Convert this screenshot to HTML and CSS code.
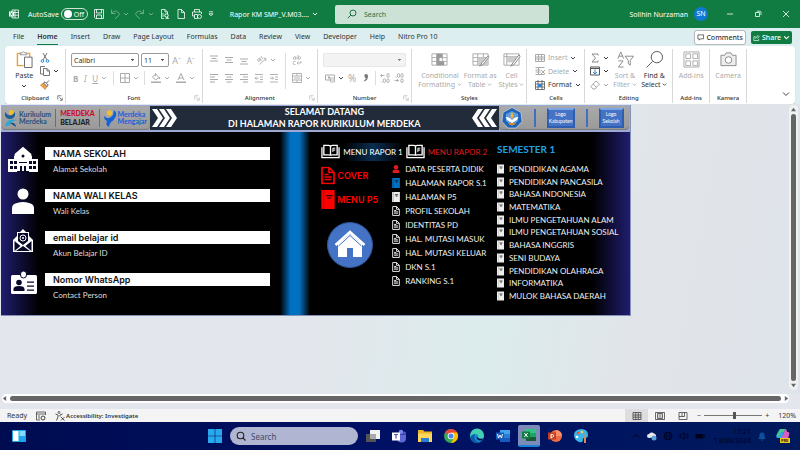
FILE: index.html
```
<!DOCTYPE html>
<html lang="id">
<head>
    <meta charset="UTF-8">
    <meta name="viewport" content="width=device-width, initial-scale=1.0">
    <title>Rapor KM SMP</title>
    <link rel="stylesheet" href="styles.css">
</head>
<body>
    <!-- shared icons -->
    <svg class="defs" aria-hidden="true">
        <symbol id="down" viewBox="0 0 6 6"><path d="M1 2l2 2 2-2" fill="none" stroke="currentColor"/></symbol>
        <symbol id="launch" viewBox="0 0 8 8"><path d="M1 6V1h5M3 3l3.500 3.500M7 3.500V7H3.500" fill="none" stroke="currentColor" stroke-width=".8"/></symbol>
        <symbol id="doc" viewBox="0 0 14 18"><path d="M1 1h7l5 5v11H1zM8 1v5h5M3.500 8h4M3.500 10.500h7M3.500 13h7" fill="none" stroke="currentColor" stroke-width="1.700"/></symbol>
        <symbol id="book" viewBox="0 0 14 18"><path d="M0 0h14v18H0z" fill="currentColor"/><path d="M2.500 0v18" stroke="#000" stroke-width=".6" opacity=".5"/><path d="M5 5h6M6.500 7.500h3" stroke="#000" stroke-width="1.400"/></symbol>
        <symbol id="open-book" viewBox="0 0 20 15"><path d="M1 3v11h18V3M3 1h5q2 0 2 1.500Q10 1 12 1h5v10h-5q-2 0-2 1-0-1-2-1H3zM10 2v10" fill="none" stroke="currentColor" stroke-width="1.400"/><path d="M12.500 8V4H15M12.500 6H15" fill="none" stroke="currentColor"/></symbol>
        <symbol id="chevrons" viewBox="0 0 25 18"><path d="M0 0h5l6 9-6 9H0l6-9zM7 0h5l6 9-6 9H7l6-9zM14 0h5l6 9-6 9h-5l6-9z" fill="#fff"/></symbol>
    </svg>

    <header class="titlebar">
        <svg class="ic" viewBox="0 0 10 10"><path d="M3 1h6.500v8H3zM6 1v8M3 3.500h6.500M3 6.200h6.500" fill="none" stroke="#fff" stroke-width=".8"/><path d="M0 2.500h5v5H0z" fill="#fff"/><path d="M1.500 3.500l2 3M3.500 3.500l-2 3" stroke="#107c41" stroke-width=".8"/></svg>
        <label class="autosave">AutoSave <span class="switch"><input type="checkbox" role="switch"><span>Off</span></span></label>
        <div class="quick">
            <button aria-label="Save"><svg class="ic" viewBox="0 0 10 10"><path d="M.5.5h9v9h-8l-1-1zM2.500.5v3.500h5V.5M2.500 9.500V6h5v3.500" fill="none" stroke="#fff" stroke-width=".8"/></svg></button>
            <button class="faded pair" aria-label="Undo"><svg class="ic" viewBox="0 0 10 10"><path d="M1.500.5v4h4M1.500 4.500Q5 .5 8 3t-1 5L5 9.800" fill="none" stroke="#fff" stroke-width=".9"/></svg><svg class="car"><use href="#down"/></svg></button>
            <button class="faded pair" aria-label="Redo"><svg class="ic" viewBox="0 0 10 10"><path d="M8.500.5v4h-4M8.500 4.500Q5 .5 2 3t1 5l2 1.800" fill="none" stroke="#fff" stroke-width=".9"/></svg><svg class="car"><use href="#down"/></svg></button>
            <button aria-label="Print preview"><svg class="ic" viewBox="0 0 10 10"><path d="M4 9.500H1.500v-9H5L7.500 3v2M5 .5V3h2.500M3 4v4" fill="none" stroke="#fff" stroke-width=".8"/><circle cx="6.500" cy="6.500" r="1.700" fill="none" stroke="#fff"/><path d="M7.500 8l2 1.800H5z" fill="#fff"/></svg></button>
            <button aria-label="New"><svg class="ic" viewBox="0 0 10 10"><path d="M2 .5h3.500L8.500 3.500v6H2zM5.500.5v3h3" fill="none" stroke="#fff" stroke-width=".8"/></svg></button>
            <button aria-label="Quick print"><svg class="ic" viewBox="0 0 10 10"><path d="M2.500 3V.5h5V3M2.500 7H.5V3h9v2M2.500 5.500h3v4h-3z" fill="none" stroke="#fff" stroke-width=".8"/><circle cx="7.500" cy="7.500" r="2" fill="none" stroke="#fff" stroke-width=".8"/></svg></button>
            <button aria-label="Customize"><svg class="car" viewBox="0 0 6 6"><path d="M1 .8h4M1 2.800l2 2 2-2z" fill="none" stroke="#fff" stroke-width=".8"/></svg></button>
        </div>
        <button class="filename">Rapor KM SMP_V.M03.... <svg class="car"><use href="#down"/></svg></button>
        <label class="search">
            <svg class="ic" viewBox="0 0 10 10"><circle cx="6" cy="4" r="3" fill="none" stroke="#217346"/><path d="M4 6L.8 9.200" stroke="#217346"/></svg>
            <input type="text" placeholder="Search" aria-label="Search">
        </label>
        <div class="account">
            <span>Solihin Nurzaman</span>
            <span class="avatar">SN</span>
        </div>
        <div class="window-buttons">
            <button aria-label="Minimize"><svg viewBox="0 0 8 8"><path d="M1 4h6" stroke="#fff" stroke-width=".8"/></svg></button>
            <button aria-label="Restore"><svg viewBox="0 0 8 8"><path d="M1.500 2.500h4v4h-4zM3 1.200h2.500q1.500 0 1.500 1.500V5" fill="none" stroke="#fff" stroke-width=".8"/></svg></button>
            <button aria-label="Close"><svg viewBox="0 0 8 8"><path d="M1 1l6 6M7 1L1 7" stroke="#fff" stroke-width=".8"/></svg></button>
        </div>
    </header>

    <nav class="tabs">
        <a href="#">File</a>
        <a href="#" class="active">Home</a>
        <a href="#">Insert</a>
        <a href="#">Draw</a>
        <a href="#">Page Layout</a>
        <a href="#">Formulas</a>
        <a href="#">Data</a>
        <a href="#">Review</a>
        <a href="#">View</a>
        <a href="#">Developer</a>
        <a href="#">Help</a>
        <a href="#">Nitro Pro 10</a>
        <div class="tab-buttons">
            <button class="comments"><svg viewBox="0 0 8 8"><path d="M1 1h6.500v4.500H4L2.500 7V5.500H1z" fill="none" stroke="currentColor" stroke-width=".8"/></svg>Comments</button>
            <button class="share"><svg viewBox="0 0 8 8"><path d="M3 3H1v4.500h5.500V5.500M3 5.500Q3 3 5.500 3M5 1l2 2-2 2" fill="none" stroke="currentColor" stroke-width=".8"/></svg>Share<svg class="car"><use href="#down"/></svg></button>
        </div>
    </nav>

    <section class="ribbon">
        <div class="group clipboard">
            <div class="tools">
                <button class="big"><svg viewBox="0 0 18 18"><path d="M12 2.500h2.500V6M5 2.500H1.500v13H8" fill="none" stroke="#e8a33d" stroke-width="1.500"/><path d="M4.500 4V2h2Q8-.5 9.500 2h2v2z" fill="#fff" stroke="#777" stroke-width=".8"/><path d="M9 6.500h8v11H9z" fill="#fff" stroke="#666"/></svg>Paste<svg class="car"><use href="#down"/></svg></button>
                <div class="stack">
                    <button aria-label="Cut"><svg class="ic" viewBox="0 0 10 10"><path d="M3 0l4 7M7 0L3 7" stroke="#555" stroke-width=".8"/><g fill="none" stroke="#2b88d8"><circle cx="2.500" cy="8" r="1.300"/><circle cx="7.500" cy="8" r="1.300"/></g></svg></button>
                    <button class="pair" aria-label="Copy"><svg class="ic" viewBox="0 0 10 10"><path d="M3.500 8H.5V.5H5M3.500 2.500h3.500L9.500 5v4.500h-6zM7 2.500V5h2.500" fill="none" stroke="#555" stroke-width=".8"/></svg><svg class="car"><use href="#down"/></svg></button>
                    <button aria-label="Format painter"><svg class="ic" viewBox="0 0 10 10"><path d="M.5 5l3-2 3.500 3.500-2 3z" fill="#f0a04b" stroke="#c87520" stroke-width=".6"/><path d="M3.500 3L5 1.800l3.200 3.200L7 6.500zM6.500 3L9 .5" fill="#fff" stroke="#555" stroke-width=".9"/></svg></button>
                </div>
            </div>
            <h2>Clipboard <svg><use href="#launch"/></svg></h2>
        </div>
        <div class="group font">
            <div class="tools rows">
                <div class="row">
                    <select class="wide" aria-label="Font"><option>Calibri</option></select>
                    <select class="narrow" aria-label="Font size"><option>11</option></select>
                    <button class="dim letter">A<sup>ˆ</sup></button>
                    <button class="dim letter small">A<sup>ˇ</sup></button>
                </div>
                <div class="row dim spread">
                    <button class="letter"><b>B</b></button>
                    <button class="letter"><i>I</i></button>
                    <button class="letter pair"><u>U</u><svg class="car"><use href="#down"/></svg></button>
                    <i class="rule"></i>
                    <button class="pair" aria-label="Borders"><svg class="ic" viewBox="0 0 10 10"><path d="M.5.5h9v9h-9zM5 .5v9M.5 5h9" fill="none" stroke="currentColor"/></svg><svg class="car"><use href="#down"/></svg></button>
                    <i class="rule"></i>
                    <button class="pair" aria-label="Fill color"><svg class="ic" viewBox="0 0 10 10"><path d="M4.500 1L8 4.500 4.500 7 1.500 4zM4.500 0v3M8.500 4v2" fill="none" stroke="currentColor"/><path d="M0 8.500h10V10H0z" fill="currentColor"/></svg><svg class="car"><use href="#down"/></svg></button>
                    <button class="pair" aria-label="Font color"><svg class="ic" viewBox="0 0 10 10"><path d="M2 7l3-6.500L8 7M3 5h4" fill="none" stroke="currentColor"/><path d="M0 8.500h10V10H0z" fill="currentColor"/></svg><svg class="car"><use href="#down"/></svg></button>
                </div>
            </div>
            <h2>Font <svg class="dim"><use href="#launch"/></svg></h2>
        </div>
        <div class="group align">
            <div class="tools dim">
                <div class="icon-grid">
                    <button aria-label="Top align"><svg class="ic" viewBox="0 0 10 10"><path d="M1 1h8M2.500 3.500h5M1 6h8" stroke="currentColor"/></svg></button>
                    <button aria-label="Middle align"><svg class="ic" viewBox="0 0 10 10"><path d="M1 2.500h8M2.500 5h5M1 7.500h8" stroke="currentColor"/></svg></button>
                    <button aria-label="Bottom align"><svg class="ic" viewBox="0 0 10 10"><path d="M1 4h8M2.500 6.500h5M1 9h8" stroke="currentColor"/></svg></button>
                    <button class="pair span" aria-label="Orientation"><svg class="ic" viewBox="0 0 10 10"><path d="M2.500 9.500l6.500-6M6.500 3L9 3.500 8.500 6" fill="none" stroke="currentColor" stroke-width=".9"/><circle cx="2" cy="5" r="1.300" fill="none" stroke="currentColor" stroke-width=".8"/><path d="M2.500 2.500l2 3.500M4 1l1.500 3" stroke="currentColor" stroke-width=".8"/></svg><svg class="car"><use href="#down"/></svg></button>
                    <button aria-label="Align left"><svg class="ic" viewBox="0 0 10 10"><path d="M1 1.500h8M1 4h5M1 6.500h8M1 9h5" stroke="currentColor"/></svg></button>
                    <button aria-label="Center"><svg class="ic" viewBox="0 0 10 10"><path d="M1 1.500h8M2.500 4h5M1 6.500h8M2.500 9h5" stroke="currentColor"/></svg></button>
                    <button aria-label="Align right"><svg class="ic" viewBox="0 0 10 10"><path d="M1 1.500h8M4 4h5M1 6.500h8M4 9h5" stroke="currentColor"/></svg></button>
                    <button aria-label="Decrease indent"><svg class="ic" viewBox="0 0 10 10"><path d="M1 1.500h8M6 4h3M6 6.500h3M1 9h8M4.500 5.200H1M2.500 3.700L1 5.200l1.500 1.500" fill="none" stroke="currentColor" stroke-width=".9"/></svg></button>
                    <button aria-label="Increase indent"><svg class="ic" viewBox="0 0 10 10"><path d="M1 1.500h8M6 4h3M6 6.500h3M1 9h8M1 5.200h3.500M3 3.700l1.500 1.500L3 6.700" fill="none" stroke="currentColor" stroke-width=".9"/></svg></button>
                </div>
                <i class="rule tall"></i>
                <div class="stack two">
                    <button aria-label="Wrap text"><svg class="ic" viewBox="0 0 10 10"><g fill="none" stroke="currentColor" stroke-width=".8"><circle cx="2.500" cy="3" r="1.300"/><path d="M3.900 1.500v3M6 0v4.500"/><circle cx="7.300" cy="3" r="1.300"/><path d="M3.500 6.500Q1 6 1 8t2.500 1.500M9 6v2H5M6.500 6.500L5 8l1.500 1.500"/></g></svg></button>
                    <button class="pair" aria-label="Merge"><svg class="ic" viewBox="0 0 10 10"><path d="M.5.5h9v9h-9zM.5 3h9M.5 7h9M5 .5V3M5 7v2.500M2 5h6" fill="none" stroke="currentColor" stroke-width=".9"/></svg><svg class="car"><use href="#down"/></svg></button>
                </div>
            </div>
            <h2>Alignment <svg class="dim"><use href="#launch"/></svg></h2>
        </div>
        <div class="group number">
            <div class="tools rows">
                <div class="row"><select class="fill" aria-label="Number format" disabled><option></option></select></div>
                <div class="row dim spread">
                    <button class="pair" aria-label="Accounting"><svg class="ic" viewBox="0 0 10 10"><path d="M.5 2h9v5h-9z" fill="none" stroke="currentColor"/><circle cx="4" cy="4.500" r="1.200" fill="currentColor"/><path d="M5.500 5h4v4h-4zM5.500 7h4" fill="#fff" stroke="currentColor" stroke-width=".8"/></svg><svg class="car dark"><use href="#down"/></svg></button>
                    <button class="letter percent">%</button>
                    <button aria-label="Comma style"><svg class="ic" viewBox="0 0 10 10"><path d="M5 1a2 2 0 0 1 2 2q0 4-3.500 5.500L3 7.500q1.700-1 1.800-2.600A2 2 0 0 1 5 1z" fill="#777"/></svg></button>
                    <i class="rule"></i>
                    <button aria-label="Increase decimal"><svg class="ic" viewBox="0 0 10 10"><g fill="none" stroke="currentColor" stroke-width=".9"><path d="M4.500 2.500H.5M2 1L.5 2.500 2 4"/><ellipse cx="8" cy="2.500" rx="1.200" ry="1.900"/><ellipse cx="4.500" cy="7.700" rx="1.200" ry="1.900"/><ellipse cx="8" cy="7.700" rx="1.200" ry="1.900"/><path d="M1.500 9h1"/></g></svg></button>
                    <button aria-label="Decrease decimal"><svg class="ic" viewBox="0 0 10 10"><g fill="none" stroke="currentColor" stroke-width=".9"><path d="M.5 7.500h4M3 6l1.500 1.500L3 9"/><ellipse cx="4.500" cy="2.500" rx="1.200" ry="1.900"/><ellipse cx="8" cy="2.500" rx="1.200" ry="1.900"/><ellipse cx="8" cy="7.700" rx="1.200" ry="1.900"/><path d="M1.500 4h1"/></g></svg></button>
                </div>
            </div>
            <h2>Number <svg class="dim"><use href="#launch"/></svg></h2>
        </div>
        <div class="group styles">
            <div class="tools dim">
                <button class="big"><svg viewBox="0 0 18 16"><path d="M1 2h16v12H1zM1 6h16M1 10h16M6 2v12M12 2v12" fill="none" stroke="currentColor"/><path d="M6 2h6v4H6zM6 6h3v4H6zM6 10h8v4H6z" fill="#999"/></svg><span>Conditional<br>Formatting <svg class="car"><use href="#down"/></svg></span></button>
                <button class="big"><svg viewBox="0 0 18 16"><path d="M1 2h16v12H1zM1 6h16M1 10h16M6 2v12M12 2v12" fill="none" stroke="currentColor"/><path d="M6 6h11v8H6z" fill="#ccc"/><path d="M17 4l-6 7-3 4 4-2 6-8z" fill="#fff" stroke="#888"/></svg><span>Format as<br>Table <svg class="car"><use href="#down"/></svg></span></button>
                <button class="big"><svg viewBox="0 0 18 16"><path d="M1 2h16v12H1zM1 5h16M4 2v12" fill="none" stroke="currentColor"/><path d="M4 5h10v6H4z" fill="#ccc"/><path d="M17 3l-6 8-3 4 4-2 6-8z" fill="#fff" stroke="#888"/></svg><span>Cell<br>Styles <svg class="car"><use href="#down"/></svg></span></button>
            </div>
            <h2>Styles</h2>
        </div>
        <div class="group cells">
            <div class="tools">
                <div class="stack lines">
                    <button class="dim"><svg class="ic" viewBox="0 0 10 10"><path d="M.5 1.500h9v7h-9zM.5 4h9M.5 6h9M3.500 1.500v7M6.500 1.500v7" fill="none" stroke="currentColor"/></svg>Insert <svg class="car dark"><use href="#down"/></svg></button>
                    <button class="dim"><svg class="ic" viewBox="0 0 10 10"><path d="M.5 1.500h9M.5 4h5M.5 6h5M.5 8.500h9M3.500 1.500v7M6 4l4 4M10 4L6 8" fill="none" stroke="currentColor"/></svg>Delete <svg class="car dark"><use href="#down"/></svg></button>
                    <button><svg class="ic" viewBox="0 0 10 10"><path d="M.5 1.500h9v8h-9zM.5 4h9M.5 7h9M3 0v10M7 0v10" fill="none" stroke="#555" stroke-width=".8"/><path d="M3 4h4v3H3z" fill="#2b88d8"/></svg>Format <svg class="car"><use href="#down"/></svg></button>
                </div>
            </div>
            <h2>Cells</h2>
        </div>
        <div class="group editing">
            <div class="tools">
                <div class="stack">
                    <button class="pair dim" aria-label="AutoSum"><svg class="ic" viewBox="0 0 10 10"><path d="M8 2.500V1H2l3.500 4L2 9h6V7.500" fill="none" stroke="#888"/></svg><svg class="car dark"><use href="#down"/></svg></button>
                    <button class="pair" aria-label="Fill"><svg class="ic" viewBox="0 0 10 10"><path d="M.5 1h9v8h-9zM.5 2.500h9" fill="none" stroke="#555"/><path d="M5 3.500V8M3 6l2 2 2-2" fill="none" stroke="#2b88d8"/></svg><svg class="car"><use href="#down"/></svg></button>
                    <button class="pair dim" aria-label="Clear"><svg class="ic" viewBox="0 0 10 10"><path d="M6 1l3.500 3L5 9H3L.8 6.500zM3 4l3.500 3.500" fill="none" stroke="currentColor"/></svg><svg class="car"><use href="#down"/></svg></button>
                </div>
                <button class="big dim"><svg viewBox="0 0 18 18"><path d="M1 8l3-7 3 7M2 5.500h4M1.500 10.500H6.500L1.500 17H7M8.500 5.500h9L14 10v5l-2-1.500V10z" fill="none" stroke="#888"/></svg><span>Sort &amp;<br>Filter <svg class="car"><use href="#down"/></svg></span></button>
                <button class="big"><svg viewBox="0 0 18 18"><circle cx="11.500" cy="6.500" r="6" fill="none" stroke="#555"/><path d="M7 11l-6.500 6.500" stroke="#555"/></svg><span>Find &amp;<br>Select <svg class="car"><use href="#down"/></svg></span></button>
            </div>
            <h2>Editing</h2>
        </div>
        <div class="group addins">
            <div class="tools dim"><button class="big"><svg viewBox="0 0 18 18"><path d="M1 1h16v16H1z" fill="none" stroke="currentColor"/><path d="M3 3h5v5H3zM10.500 3h5v5h-5zM3 10.500h5v5H3zM10.500 10.500h5v5h-5z" fill="none" stroke="currentColor"/></svg>Add-ins</button></div>
            <h2>Add-ins</h2>
        </div>
        <div class="group kamera">
            <div class="tools dim"><button class="big"><svg viewBox="0 0 18 18"><path d="M1 4.500h4L6.500 2h5L13 4.500h4v11H1z" fill="#eee" stroke="#888"/><circle cx="9" cy="9.500" r="3.500" fill="#fff" stroke="#888"/></svg>Camera</button></div>
            <h2>Kamera</h2>
        </div>
        <div class="group last"><button aria-label="Collapse ribbon"><svg class="ic" viewBox="0 0 10 10"><path d="M2 3.500l3 3 3-3" fill="none" stroke="#444"/></svg></button></div>
    </section>

    <main class="workspace">
        <div class="sheet">
            <div class="banner">
                <div class="logos">
                    <div class="logo kurikulum"><svg viewBox="0 0 12 18"><circle cx="6.500" cy="3.500" r="2.500" fill="#f3bd2c"/><path d="M0 3q5 7 10 0 1 7-5 7T0 3z" fill="#1c5f94"/><path d="M0 17q2-8 12-6-6 1-8 6z" fill="#2ba8d8"/><path d="M5 14q5-1 6 4-3-2-6-4z" fill="#174c83"/></svg><span>Kurikulum<br>Merdeka</span></div>
                    <i></i>
                    <div class="logo belajar"><span><em>MERDEKA</em><br>BELAJAR</span></div>
                    <i></i>
                    <div class="logo mengajar"><svg viewBox="0 0 12 18"><circle cx="5.500" cy="4" r="2.700" fill="#f3bd2c"/><path d="M0 7q5 5 9-1l1-5q4 3 1 8-2 3-4 4-2 3-2 5-4-2-2-6Q0 11 0 7z" fill="#1463d6"/></svg><span>Merdeka<br>Mengajar</span></div>
                </div>
                <svg class="chev"><use href="#chevrons"/></svg>
                <h1>SELAMAT DATANG<br>DI HALAMAN RAPOR KURIKULUM MERDEKA</h1>
                <svg class="chev flip"><use href="#chevrons"/></svg>
                <div class="logos badges">
                    <svg class="tutwuri" viewBox="0 0 22 22"><path d="M11 .5l9 5 1 9-6 6.500H7L1 14.500l1-9z" fill="#1e63b8" stroke="#dbe6f5" stroke-width=".6"/><path d="M11 4l6 3v7l-6 5-6-5V7z" fill="#5b9be0"/><path d="M4.500 10q3.500-.5 6.500 3 3-3.500 6.500-3-1 3.500-4 4.500L11 16l-2.500-1.500q-3-1-4-4.500z" fill="#fff"/><path d="M11 5q3 4 0 7-3-3 0-7z" fill="#f2b632"/><path d="M7 16h8l-2 2H9z" fill="#d98b2b"/></svg>
                    <i></i>
                    <button>Logo<br>Kabupaten</button>
                    <i></i>
                    <button>Logo<br>Sekolah</button>
                </div>
            </div>

            <div class="board">
                <div class="profile">
                    <div class="entry">
                        <svg viewBox="0 0 30 27"><path d="M15 2l9 8v15H6V10z" fill="#fff"/><path d="M7 9l8-7 8 7" fill="none" stroke="#fff" stroke-width="2"/><path d="M0 13h9v13H0zM21 13h9v13h-9z" fill="#fff"/><path d="M2 15h3v3H2zM6 15h3v3H6zM2 20h3v3H2zM6 20h3v3H6zM21 15h3v3h-3zM25 15h3v3h-3zM21 20h3v3h-3zM25 20h3v3h-3zM11 16h8v1h-8zM12 20h2v6h-2zM16 20h2v6h-2z" fill="#08082a"/><circle cx="15" cy="10" r="1.500" fill="#08082a"/></svg>
                        <div><strong>NAMA SEKOLAH</strong><span>Alamat Sekolah</span></div>
                    </div>
                    <div class="entry">
                        <svg viewBox="0 0 30 27"><circle cx="15" cy="6" r="5.500" fill="#fff"/><path d="M4 26v-6q0-4 5-5 6-2 12 0 5 1 5 5v6z" fill="#fff"/></svg>
                        <div><strong>NAMA WALI KELAS</strong><span>Wali Kelas</span></div>
                    </div>
                    <div class="entry">
                        <svg viewBox="0 0 30 27"><path d="M5 10l4-4V2h3l3-3 3 3h3v4l4 4v12H5z" fill="#fff"/><path d="M10 3h10v8l-5 4-5-4zM6.500 11l6 5-6 5zM23.500 11l-6 5 6 5zM8 21l7-5 7 5z" fill="#08082a"/><circle cx="15" cy="8" r="3" fill="none" stroke="#fff"/><circle cx="15" cy="8" r="1" fill="#fff"/></svg>
                        <div><strong>email belajar id</strong><span>Akun Belajar ID</span></div>
                    </div>
                    <div class="entry">
                        <svg viewBox="0 0 30 27"><rect x="3" y="3" width="26" height="19" rx="1.500" fill="#fff"/><rect x="12.500" y="-1" width="6" height="7" rx="3" fill="#fff" stroke="#08082a"/><circle cx="11" cy="10.500" r="2.800" fill="#08082a"/><path d="M5.500 19v-2q0-3 5.500-3t5.500 3v2zM19 9.500h7v1.300h-7zM19 13.500h7v1.300h-7zM19 17.500h7v1.300h-7z" fill="#08082a"/></svg>
                        <div><strong>Nomor WhatsApp</strong><span>Contact Person</span></div>
                    </div>
                </div>

                <div class="band"></div>

                <div class="menus">
                    <div class="heads">
                        <a href="#"><svg><use href="#open-book"/></svg><span class="glow">MENU RAPOR 1</span></a>
                        <a href="#"><svg><use href="#open-book"/></svg><span class="red">MENU RAPOR 2</span></a>
                    </div>
                    <div class="main-links">
                        <a href="#"><svg viewBox="0 0 14 18"><use href="#doc"/></svg>COVER</a>
                        <a href="#"><svg viewBox="0 0 14 20"><path d="M0 0h14v20H0z" fill="red"/><path d="M2.500 0v20" stroke="#700" stroke-width=".6"/><path d="M5 6h7M6 8.500h4" stroke="#000"/></svg>MENU P5</a>
                        <a href="#" class="home" aria-label="Home"><svg viewBox="0 0 46 46"><circle cx="23" cy="23" r="22.500" fill="#4472c4" stroke="#2f5597"/><path d="M23 12l12 10v13h-9v-9h-6v9h-9V22z" fill="#fff"/><path d="M8.500 23L23 10l14.500 13" fill="none" stroke="#fff" stroke-width="2.500"/><path d="M11.500 24L23 13.500 34.500 24" fill="none" stroke="#4472c4"/></svg></a>
                    </div>
                    <ul class="pages">
                        <li><a href="#"><svg class="red" viewBox="0 0 14 18"><circle cx="7" cy="6" r="4" fill="currentColor"/><path d="M1 16v-3q0-3 6-3t6 3v3z" fill="currentColor"/></svg>DATA PESERTA DIDIK</a></li>
                        <li><a href="#"><svg class="blue"><use href="#book"/></svg>HALAMAN RAPOR S.1</a></li>
                        <li><a href="#"><svg><use href="#book"/></svg>HALAMAN P5</a></li>
                        <li><a href="#"><svg><use href="#doc"/></svg>PROFIL SEKOLAH</a></li>
                        <li><a href="#"><svg><use href="#doc"/></svg>IDENTITAS PD</a></li>
                        <li><a href="#"><svg><use href="#doc"/></svg>HAL. MUTASI MASUK</a></li>
                        <li><a href="#"><svg><use href="#doc"/></svg>HAL. MUTASI KELUAR</a></li>
                        <li><a href="#"><svg><use href="#doc"/></svg>DKN S.1</a></li>
                        <li><a href="#"><svg><use href="#doc"/></svg>RANKING S.1</a></li>
                    </ul>
                </div>

                <div class="semester">
                    <h2>SEMESTER 1</h2>
                    <ul class="pages">
                        <li><a href="#"><svg><use href="#book"/></svg>PENDIDIKAN AGAMA</a></li>
                        <li><a href="#"><svg><use href="#book"/></svg>PENDIDIKAN PANCASILA</a></li>
                        <li><a href="#"><svg><use href="#book"/></svg>BAHASA INDONESIA</a></li>
                        <li><a href="#"><svg><use href="#book"/></svg>MATEMATIKA</a></li>
                        <li><a href="#"><svg><use href="#book"/></svg>ILMU PENGETAHUAN ALAM</a></li>
                        <li><a href="#"><svg><use href="#book"/></svg>ILMU PENGETAHUAN SOSIAL</a></li>
                        <li><a href="#"><svg><use href="#book"/></svg>BAHASA INGGRIS</a></li>
                        <li><a href="#"><svg><use href="#book"/></svg>SENI BUDAYA</a></li>
                        <li><a href="#"><svg><use href="#book"/></svg>PENDIDIKAN OLAHRAGA</a></li>
                        <li><a href="#"><svg><use href="#book"/></svg>INFORMATIKA</a></li>
                        <li><a href="#"><svg><use href="#book"/></svg>MULOK BAHASA DAERAH</a></li>
                    </ul>
                </div>
            </div>
        </div>
        <div class="vscroll">
            <svg viewBox="0 0 6 6"><path d="M3 1l3 4H0z" fill="#666"/></svg>
            <span></span>
            <svg viewBox="0 0 6 6"><path d="M3 5l3-4H0z" fill="#666"/></svg>
        </div>
    </main>
    <div class="hscroll">
        <svg viewBox="0 0 6 6"><path d="M1 3l4-3v6z" fill="#666"/></svg>
        <span></span>
        <svg viewBox="0 0 6 6"><path d="M5 3L1 0v6z" fill="#666"/></svg>
    </div>

    <footer class="statusbar">
        <span>Ready</span>
        <svg class="ic macro" viewBox="0 0 10 10"><path d="M9.500 4V1h-9v8H4M.5 3h9M2 5h2M2 7h2" fill="none" stroke="#444" stroke-width=".8"/><circle cx="7" cy="7" r="2" fill="none" stroke="#444"/></svg>
        <button class="access"><svg class="ic" viewBox="0 0 10 10"><circle cx="4" cy="1.500" r="1" fill="none" stroke="#444" stroke-width=".8"/><path d="M.5 3L3 4v2L1.500 9.500M7.500 3L5 4v1.500M6 6l3.500 3.500M9.500 6L6 9.500" fill="none" stroke="#444" stroke-width=".9"/></svg>Accessibility: Investigate</button>
        <div class="views">
            <button class="on" aria-label="Normal"><svg class="ic" viewBox="0 0 10 10"><path d="M1 1.500h8v7H1zM1 4h8M1 6.200h8M3.700 1.500v7M6.300 1.500v7" fill="none" stroke="#444" stroke-width=".8"/></svg></button>
            <button aria-label="Page layout"><svg class="ic" viewBox="0 0 10 10"><path d="M.5 1.500h9v7h-9zM2.500 2.500h5v5h-5zM3.500 4h3M3.500 6h3" fill="none" stroke="#444" stroke-width=".8"/></svg></button>
            <button aria-label="Page break"><svg class="ic" viewBox="0 0 10 10"><path d="M1 1.500h8v7H1zM4 1.500v4M1 5.500h5.500v-4" fill="none" stroke="#444" stroke-width=".8"/></svg></button>
        </div>
        <div class="zoom">
            <button aria-label="Zoom out">−</button>
            <input type="range" min="0" max="100" value="53" aria-label="Zoom">
            <button aria-label="Zoom in">+</button>
            <span>120%</span>
        </div>
    </footer>

    <div class="taskbar">
        <button class="widgets" aria-label="Widgets"><svg viewBox="0 0 14 14"><rect y="1" width="14" height="12" rx="1" fill="#1fa4ee"/><path d="M1 2h5.500v10H1z" fill="#fff"/><path d="M7.500 2H13v5H7.500z" fill="#7fdcff"/></svg></button>
        <div class="apps">
            <button aria-label="Start"><svg viewBox="0 0 14 14"><path d="M0 0h6.700v6.700H0zM7.300 0H14v6.700H7.300zM0 7.300h6.700V14H0zM7.300 7.300H14V14H7.300z" fill="#27a9ee"/></svg></button>
            <label class="task-search"><svg class="ic" viewBox="0 0 10 10"><circle cx="4.500" cy="4.500" r="3.300" fill="none" stroke="#222" stroke-width="1.100"/><path d="M7 7l2.500 2.500" stroke="#222" stroke-width="1.100"/></svg><input type="text" placeholder="Search" aria-label="Search Windows"></label>
            <button aria-label="Task view"><svg viewBox="0 0 14 14"><path d="M0 5h10v8H0z" fill="#555"/><path d="M4 1h10v9H4z" fill="#f2f2f2"/><path d="M4 5h6v5H4z" fill="#aaa"/></svg></button>
            <button aria-label="Teams"><svg viewBox="0 0 14 14"><circle cx="9" cy="3" r="2.300" fill="#7b83eb"/><circle cx="12.500" cy="4" r="1.500" fill="#5059c9"/><path d="M5 5.500h9v4q0 4-4.500 4T5 9.500z" fill="#5f67d6"/><path d="M0 3.500h8v8H0z" fill="#fff"/><path d="M2 5.500h4M4 5.500v4" stroke="#4b53bc" stroke-width="1.200"/></svg></button>
            <button aria-label="Explorer"><svg viewBox="0 0 14 14"><path d="M0 1h5l1.500 1.500H14V13H0z" fill="#f0b429"/><path d="M0 4.500h14V13H0z" fill="#ffd75e"/><path d="M3 9h8v4H3z" fill="#2b7cd3"/></svg></button>
            <button aria-label="Chrome"><svg viewBox="0 0 14 14"><circle cx="7" cy="7" r="7" fill="#34a853"/><path d="M7 7L.9 3.500A7 7 0 0 1 13.100 3.500z" fill="#ea4335"/><path d="M7 3.500h6.100A7 7 0 0 1 7 14l3-5.300z" fill="#fbbc04"/><circle cx="7" cy="7" r="3.300" fill="#fff"/><circle cx="7" cy="7" r="2.500" fill="#4285f4"/></svg></button>
            <button aria-label="Edge"><svg viewBox="0 0 14 14"><circle cx="7" cy="7" r="7" fill="#1686d0"/><path d="M0 6a7 7 0 0 1 14 1q0 3-4 3-2 0-2-1 1-4-3-4Q1 5 0 8z" fill="#45cfb0"/><path d="M5 5q-2 4 1 7 3 2 6 0-5 4-10 0-3-5 3-7z" fill="#0c59a4"/><path d="M8 8.500q1 2 5 1l-1 2Q7 12 6.500 8z" fill="#001058"/></svg></button>
            <button aria-label="Word"><svg viewBox="0 0 14 14"><path d="M4 1h10v12H4z" fill="#41a5ee"/><path d="M4 5h10v8H4z" fill="#2b7cd3"/><path d="M4 9h10v4H4z" fill="#185abd"/><path d="M0 3.500h8v7H0z" fill="#185abd"/><path d="M1.500 5l1 4L4 6l1.500 3 1-4" fill="none" stroke="#fff" stroke-width=".9"/></svg></button>
            <button class="current" aria-label="Excel"><svg viewBox="0 0 14 14"><path d="M4 1h10v12H4z" fill="#33c481"/><path d="M4 5h10v8H4z" fill="#21a366"/><path d="M4 9h10v4H4z" fill="#185c37"/><path d="M0 3.500h8v7H0z" fill="#107c41"/><path d="M2.300 5l3.400 4M5.700 5L2.300 9" stroke="#fff"/></svg></button>
            <button aria-label="PowerPoint"><svg viewBox="0 0 14 14"><circle cx="8" cy="7" r="6" fill="#ed6c47"/><path d="M8 7V1a6 6 0 0 1 6 6z" fill="#ff8f6b"/><path d="M0 3.500h8v7H0z" fill="#c43e1c"/><path d="M3 9.500v-4h1.500q1.200 0 1.200 1.200T4.500 8H3" fill="none" stroke="#fff"/></svg></button>
            <button aria-label="Paint"><svg viewBox="0 0 14 14"><path d="M7 0q7 0 7 6 0 3-3 3t-2 2q0 3-4 2Q0 11 0 6t7-6z" fill="#39b5ea"/><circle cx="4" cy="4" r="1.300" fill="#f25022"/><circle cx="8" cy="3" r="1.300" fill="#ffd23f"/><circle cx="3" cy="8" r="1.300" fill="#fff"/><path d="M11 3l1 6v5h-2V9z" fill="#d98b4a"/></svg></button>
        </div>
        <div class="tray">
            <svg viewBox="0 0 10 10"><path d="M2 6.500l3-3 3 3" fill="none" stroke="#02021c"/></svg>
            <svg viewBox="0 0 10 10"><path d="M2 7a2 2 0 0 1 0-4 3 3 0 0 1 5-.5Q9.500 3 9 6z" fill="#e8e8e8"/><circle cx="7" cy="7" r="2.500" fill="#5aa2d8"/></svg>
            <svg viewBox="0 0 10 10"><circle cx="5" cy="5" r="4" fill="none" stroke="#02021c"/><path d="M1 5h8M5 1q-4 4 0 8M5 1q4 4 0 8" fill="none" stroke="#02021c" stroke-width=".7"/></svg>
            <svg viewBox="0 0 10 10"><path d="M1 3.500h2L5 1.500v7L3 6.500H1zM6.500 3.500q1.500 1.500 0 3M8 2q2.500 3 0 6" fill="none" stroke="#02021c" stroke-width=".9"/></svg>
            <svg viewBox="0 0 10 10"><path d="M.5 3h8v4.500h-8z" fill="#02021c"/><path d="M9 4.200h1v2H9z" fill="#02021c"/></svg>
            <div class="clock">17:21<br>13/08/2024</div>
            <svg viewBox="0 0 10 10"><path d="M1 8q1.500-1 1.500-4a2.500 2.500 0 0 1 5 0Q7.500 7 9 8zM4 8.500h2v1H4z" fill="#0c4f9c"/></svg>
            <svg class="copilot" viewBox="0 0 14 14"><path d="M4 0h5L6 9H2Q-1 9 1 5z" fill="#2aa7e8"/><path d="M9 0q2 0 2 3h1q2 0 1 3l-1 4H5l3-7z" fill="#d75fc0"/><path d="M4 0h5L8 3H5L3 8q-3 0-2-3z" fill="#45c48c"/><path d="M4 9h10v5H4z" fill="#f5c518"/><text x="5" y="13" font-size="4" font-weight="bold" fill="#222">PRE</text></svg>
        </div>
    </div>
</body>
</html>
```

FILE: styles.css
```
* {
    box-sizing: border-box;
}
body {
    margin: 0;
    height: 100vh;
    display: flex;
    flex-direction: column;
    overflow: hidden;
    font-family: "Noto Sans", "Open Sans", sans-serif;
    font-size: 7px;
    color: #333;
    background: linear-gradient(#dceeef 110px, #e3e6ec 110px);
}
button, input, select {
    font: inherit;
    color: inherit;
    background: none;
    border: 0;
    padding: 0;
    margin: 0;
}
button {
    display: flex;
    align-items: center;
    justify-content: center;
}
a {
    color: inherit;
    text-decoration: none;
}
svg {
    display: block;
    flex: none;
    overflow: visible;
}
.defs {
    position: absolute;
    width: 0;
    height: 0;
}
.ic {
    width: 10px;
    height: 10px;
}
.car {
    width: 6px;
    height: 6px;
}
.pair {
    gap: 3px;
}
.dim {
    color: #aaa;
}
.dark {
    color: #444;
}

/* title bar */
.titlebar {
    flex: none;
    display: flex;
    align-items: center;
    height: 28px;
    padding-left: 9px;
    color: #fff;
    background: #107c41;
    white-space: nowrap;
}
.autosave {
    display: flex;
    align-items: center;
    gap: 2px;
    margin-left: 9px;
}
.switch {
    display: flex;
    align-items: center;
    gap: 2px;
    width: 27px;
    height: 12px;
    padding-left: 2px;
    border: 1px solid #cfe5d8;
    border-radius: 6px;
}
.switch input {
    flex: none;
    appearance: none;
    width: 8px;
    height: 8px;
    border-radius: 50%;
    background: #fff;
}
.quick {
    display: flex;
    align-items: center;
    gap: 6px;
    margin-left: 6px;
}
.faded {
    opacity: .4;
}
.filename {
    gap: 3px;
    margin-left: 16px;
}
.search {
    flex: 0 1 27%;
    display: flex;
    align-items: center;
    gap: 7px;
    height: 19px;
    margin-left: 17px;
    padding-left: 12px;
    border-radius: 2px;
    background: #cde2d6;
}
.search input {
    flex: 1;
    min-width: 0;
    color: #217346;
}
.search input::placeholder {
    color: #217346;
}
.account {
    display: flex;
    align-items: center;
    gap: 6px;
    margin-left: auto;
}
.avatar {
    width: 14px;
    height: 14px;
    border-radius: 50%;
    line-height: 14px;
    text-align: center;
    background: #0f78d4;
}
.window-buttons {
    display: flex;
    gap: 20px;
    margin: 0 10px 0 18px;
}
.window-buttons svg {
    width: 8px;
    height: 8px;
}

/* ribbon tabs */
.tabs {
    flex: none;
    display: flex;
    align-items: center;
    gap: 13px;
    height: 18px;
    padding: 0 8px 0 13px;
}
.tabs a {
    line-height: 14px;
    border-bottom: 1px solid transparent;
    white-space: nowrap;
}
.tabs .active {
    font-weight: 600;
    border-color: #107c41;
}
.tab-buttons {
    display: flex;
    gap: 6px;
    margin-left: auto;
}
.tab-buttons button {
    gap: 2px;
    height: 13px;
    padding: 0 2px;
    border-radius: 2px;
    font-weight: 500;
}
.tab-buttons svg {
    width: 7px;
    height: 7px;
}
.comments {
    background: #fff;
    outline: 1px solid #b8b8b8;
}
.share {
    color: #fff;
    background: #107c41;
}

/* ribbon */
.ribbon {
    flex: none;
    display: flex;
    height: 58px;
    margin: 0 5px;
    border-radius: 4px;
    background: #fff;
    box-shadow: 0 1px 1px #c4c8d6;
}
.group {
    display: flex;
    flex-direction: column;
    min-width: 0;
    margin: 3px 0 1px;
    border-right: 1px solid #d8d8d8;
}
.clipboard { flex: 61 1 0; }
.font { flex: 138 1 0; }
.align { flex: 116 1 0; }
.number { flex: 95 1 0; }
.styles { flex: 116 1 0; }
.cells { flex: 58 1 0; }
.editing { flex: 88 1 0; }
.addins { flex: 37 1 0; }
.kamera { flex: 36 1 0; }
.last {
    flex: 45 1 0;
    border: 0;
    align-items: flex-end;
    justify-content: flex-end;
    padding: 0 4px 4px 0;
}
.tools {
    flex: 1;
    display: flex;
    justify-content: space-evenly;
}
.clipboard .tools,
.styles .tools,
.cells .tools {
    padding-left: 4px;
}
.group h2 {
    display: flex;
    align-items: center;
    margin: 0;
    height: 10px;
    font-size: 6px;
    line-height: 10px;
    font-weight: 500;
}
.group h2::before {
    content: "";
    flex: 1;
}
.group h2::after {
    content: "";
    flex: 1;
}
.group h2 svg {
    order: 3;
    width: 6px;
    height: 6px;
    margin-right: 2px;
    margin-left: -8px;
}
.big {
    flex-direction: column;
    justify-content: flex-start;
    gap: 3px;
    padding-top: 2px;
    line-height: 9px;
}
.big > svg:first-child {
    width: 17px;
    height: 17px;
}
.big span .car {
    display: inline-block;
    width: 5px;
    height: 5px;
}
.stack {
    display: flex;
    flex-direction: column;
    align-items: flex-start;
    justify-content: space-evenly;
}
.two {
    justify-content: flex-start;
    gap: 4px;
    padding-top: 4px;
}
.two button {
    height: 14px;
}
.lines button {
    gap: 3px;
}
.rows {
    flex-direction: column;
    justify-content: flex-start;
    gap: 4px;
    padding: 4px 5px;
}
.row {
    display: flex;
    align-items: center;
    gap: 2px;
    height: 14px;
}
.spread {
    justify-content: space-between;
    padding: 0 2px;
}
.row select {
    height: 14px;
    padding: 0 2px;
    border: 1px solid #9a9a9a;
    border-radius: 2px;
    appearance: none;
    background: linear-gradient(45deg, transparent 50%, #555 50%) right 5px center / 2px 2px no-repeat, linear-gradient(-45deg, transparent 50%, #555 50%) right 3px center / 2px 2px no-repeat;
}
.wide {
    flex: 72;
}
.narrow {
    flex: 25;
}
.row .fill {
    flex: 1;
    border-color: #ddd;
    background-color: #eee;
}
.letter {
    font-size: 8px;
}
.row > .dim.letter {
    flex: 14;
    font-size: 9px;
}
.row > .dim.small {
    font-size: 8px;
}
.letter sup {
    font-size: 7px;
    line-height: 7px;
}
.row .percent {
    font-size: 10px;
}
.rule {
    width: 1px;
    height: 14px;
    background: #ddd;
}
.tall {
    height: 36px;
    margin-top: 4px;
}
.icon-grid {
    display: grid;
    grid-template-columns: repeat(5, 10px);
    grid-template-rows: 14px 14px;
    gap: 4px 5px;
    padding-top: 4px;
}
.span {
    grid-column: span 2;
}

/* workspace */
.workspace {
    flex: 1;
    display: flex;
    justify-content: space-between;
    align-items: flex-start;
    min-height: 0;
    padding: 1px 2px 4px 1px;
    background: linear-gradient(100deg, #e3e6ed, #e3e6ec 40%, #dceced 62%, #e1e4e9 80%, #dfe4ea);
}
.sheet {
    flex: 0 0 79%;
    font-family: Lato, "Open Sans", sans-serif;
    border: 1px solid #8791b8;
    border-width: 0 1px 1px 0;
}
.banner {
    display: flex;
    align-items: center;
    height: 27px;
    padding: 1px 1px 2px;
    background: #9da8d4;
}
.banner h1 {
    flex: 1;
    margin: 0;
    font-size: 9px;
    line-height: 12px;
    font-weight: 700;
    text-align: center;
    white-space: nowrap;
    color: #fff;
    align-self: stretch;
    background: #222b3a;
}
.chev {
    width: 27px;
    height: 24px;
    padding: 3px 0 3px 2px;
    background: #222b3a;
}
.flip {
    transform: scaleX(-1);
}
.logos {
    display: flex;
    align-items: center;
    justify-content: space-between;
    width: 148px;
    height: 24px;
    padding: 0 3px;
    border-radius: 4px;
    background: linear-gradient(#a9a9a9, #9a9a9a);
    box-shadow: inset 0 -1px 1px #777;
}
.logos i {
    width: 1px;
    height: 18px;
    background: #4472c4;
}
.logo {
    display: flex;
    align-items: center;
    gap: 2px;
    font-size: 7px;
    line-height: 7px;
    font-weight: 700;
    color: #2a4f7c;
}
.logo svg {
    width: 12px;
    height: 18px;
}
.belajar {
    line-height: 9px;
    font-weight: 900;
    color: #222;
}
.belajar em {
    font-style: normal;
    color: #c8102e;
}
.mengajar {
    color: #1463d6;
}
.badges {
    width: 130px;
    padding: 0 5px 0 2px;
}
.badges i {
    width: 2px;
    background: #3f6fc0;
}
.badges i + button {
    min-width: 25px;
}
.badges .tutwuri {
    width: 22px;
    height: 22px;
}
.badges button {
    height: 20px;
    border: 2px solid #2f5eb0;
    border-top-color: #7ba4e8;
    font-size: 5px;
    line-height: 7px;
    color: #fff;
    background: #4472c4;
}
.board {
    display: grid;
    grid-template-columns: 280fr 30fr 186fr 134fr;
    height: 183px;
    color: #fff;
    background: linear-gradient(90deg, #201c70, #000 6%, #000 94%, #201c70);
}
.profile {
    display: flex;
    flex-direction: column;
    padding: 14px 10px 0 7px;
}
.entry {
    display: flex;
    gap: 7px;
    height: 42px;
}
.entry > svg {
    width: 30px;
    height: 27px;
}
.entry > div {
    flex: 1;
}
.entry strong {
    display: block;
    margin-top: 1px;
    padding-left: 8px;
    font-family: Inter, "Open Sans", sans-serif;
    font-size: 9px;
    line-height: 13px;
    font-weight: 600;
    color: #111;
    background: #fff;
}
.entry span {
    display: block;
    padding-left: 8px;
    font-size: 8px;
    line-height: 18px;
    color: #ddd;
}
.band {
    background: linear-gradient(90deg, #000, #0070c0 35%, #0070c0 65%, #000);
}
.menus {
    display: grid;
    grid-template-columns: 71fr 104fr;
    grid-template-rows: 21px 1fr;
    padding: 9px 0 0 11px;
    white-space: nowrap;
}
.menus .pages {
    height: 122px;
    margin-top: 2px;
}
.heads {
    grid-column: span 2;
    display: flex;
    gap: 3px;
    font-size: 8px;
}
.heads a {
    display: flex;
    align-items: center;
    gap: 3px;
}
.heads svg {
    width: 19px;
    height: 15px;
}
.glow {
    line-height: 18px;
    background: linear-gradient(90deg, transparent, #0a2e52, transparent);
}
.red {
    color: #e01b1b;
}
.blue {
    color: #0070c0;
}
.main-links {
    padding-top: 1px;
}
.main-links a {
    display: flex;
    align-items: center;
    gap: 2px;
    height: 24px;
    font-family: Inter, "Open Sans", sans-serif;
    font-size: 9px;
    font-weight: 600;
    color: #f00;
}
.main-links svg {
    width: 14px;
    height: 19px;
}
.main-links .home {
    height: 46px;
    margin: 11px 0 0 6px;
}
.main-links .home svg {
    width: 46px;
    height: 46px;
}
.pages {
    display: flex;
    flex-direction: column;
    justify-content: space-between;
    margin: 0;
    padding: 0;
    list-style: none;
    font-size: 8px;
    line-height: 10px;
    color: #eee;
    white-space: nowrap;
}
.pages a {
    display: flex;
    align-items: center;
    gap: 5px;
}
.pages svg {
    width: 8px;
    height: 10px;
}
.semester {
    padding: 11px 0 0 1px;
}
.semester h2 {
    margin: 0;
    font-size: 10px;
    line-height: 13px;
    font-weight: 700;
    color: #1fa3e0;
}
.semester .pages {
    height: 137px;
    margin-top: 8px;
}
.semester .pages svg {
    width: 7px;
}

/* scrollbars */
.vscroll {
    align-self: stretch;
    display: flex;
    flex-direction: column;
    align-items: center;
    gap: 2px;
    width: 9px;
    padding: 2px 0;
    border-radius: 5px;
    background: #f0f1f3;
}
.vscroll span {
    flex: 1;
    width: 5px;
    border-radius: 3px;
    background: #666;
}
.vscroll svg, .hscroll svg {
    width: 5px;
    height: 5px;
}
.hscroll {
    flex: none;
    display: flex;
    align-items: center;
    gap: 3px;
    height: 9px;
    margin: 0 11px 6px 2px;
    border-radius: 5px;
    background: #fff;
}
.hscroll span {
    flex: 1;
    height: 5px;
    border-radius: 3px;
    background: #666;
}

/* status bar */
.statusbar {
    flex: none;
    display: flex;
    align-items: center;
    height: 13px;
    padding: 0 4px 0 7px;
    background: #f4f4f4;
}
.macro {
    margin: 0 9px 0 9px;
}
.access {
    gap: 1px;
    font-size: 6px;
    font-weight: 600;
}
.views {
    display: flex;
    margin-left: auto;
}
.views button {
    width: 23px;
    height: 13px;
}
.views .on {
    background: #ddd;
}
.zoom {
    display: flex;
    align-items: center;
    gap: 3px;
    margin-left: 3px;
}
.zoom span {
    margin-left: 6px;
}
.zoom input {
    appearance: none;
    width: 58px;
    height: 9px;
    background: linear-gradient(#777, #777) center / 100% 1px no-repeat;
}
.zoom input::-webkit-slider-thumb {
    appearance: none;
    width: 3px;
    height: 7px;
    background: #555;
}

/* taskbar */
.taskbar {
    flex: none;
    display: grid;
    grid-template-columns: 192px 1fr auto;
    align-items: center;
    height: 28px;
    padding: 0 10px 0 12px;
    background: linear-gradient(90deg, #000c50, #001064 50%, #001a5c);
}
.taskbar button {
    width: 22px;
    height: 22px;
    border-radius: 2px;
}
.taskbar .widgets {
    width: 14px;
}
.taskbar button svg {
    width: 14px;
    height: 14px;
}
.apps {
    display: flex;
    align-items: center;
    gap: 4px;
}
.taskbar .current {
    background: #7d8bb8;
    border-bottom: 2px solid #1683d8;
}
.task-search {
    display: flex;
    align-items: center;
    gap: 5px;
    width: 128px;
    height: 18px;
    padding-left: 6px;
    border-radius: 9px;
    background: #b0b5d2;
}
.task-search input {
    flex: 1;
    min-width: 0;
    font-size: 8px;
}
.task-search input::placeholder {
    color: #444a66;
}
.tray {
    display: flex;
    align-items: center;
    gap: 6px;
    color: #02021c;
}
.tray svg {
    width: 10px;
    height: 10px;
}
.clock {
    margin-left: 3px;
    line-height: 9px;
    text-align: right;
}
.tray .copilot {
    width: 14px;
    height: 14px;
    margin-left: 3px;
}
```
